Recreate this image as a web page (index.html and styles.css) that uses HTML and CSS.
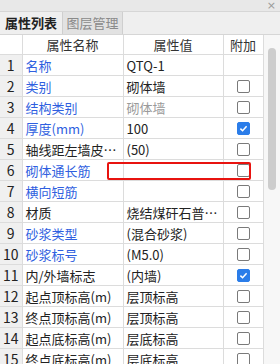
FILE: index.html
```html
<!DOCTYPE html>
<html lang="zh-CN">
<head>
    <meta charset="UTF-8">
    <title>属性列表</title>
    <link rel="stylesheet" href="styles.css">
</head>
<body>
    <div class="panel">
        <div class="titlebar"><span class="close">×</span></div>
        <div class="tabs">
            <div class="tab active">属性列表</div>
            <div class="tab">图层管理</div>
        </div>
        <div class="grid">
            <div class="table-wrap">
                <table class="props">
                    <colgroup>
                        <col class="c-num"><col class="c-name"><col class="c-val"><col class="c-add">
                    </colgroup>
                    <thead>
                        <tr><th></th><th>属性名称</th><th>属性值</th><th>附加</th></tr>
                    </thead>
                    <tbody>
                        <tr><td class="num">1</td><td class="name link">名称</td><td>QTQ-1</td><td></td></tr>
                        <tr><td class="num">2</td><td class="name link">类别</td><td>砌体墙</td><td class="add"><span class="box"></span></td></tr>
                        <tr><td class="num">3</td><td class="name link">结构类别</td><td class="muted">砌体墙</td><td class="add"><span class="box"></span></td></tr>
                        <tr><td class="num">4</td><td class="name link">厚度(mm)</td><td>100</td><td class="add"><span class="box checked"></span></td></tr>
                        <tr><td class="num">5</td><td class="name">轴线距左墙皮距离(mm)</td><td>(50)</td><td class="add"><span class="box"></span></td></tr>
                        <tr><td class="num">6</td><td class="name link">砌体通长筋</td><td></td><td class="add"><span class="box"></span></td></tr>
                        <tr><td class="num">7</td><td class="name link">横向短筋</td><td></td><td class="add"><span class="box"></span></td></tr>
                        <tr><td class="num">8</td><td class="name">材质</td><td>烧结煤矸石普通砖</td><td class="add"><span class="box"></span></td></tr>
                        <tr><td class="num">9</td><td class="name link">砂浆类型</td><td>(混合砂浆)</td><td class="add"><span class="box"></span></td></tr>
                        <tr><td class="num">10</td><td class="name link">砂浆标号</td><td>(M5.0)</td><td class="add"><span class="box"></span></td></tr>
                        <tr><td class="num">11</td><td class="name">内/外墙标志</td><td>(内墙)</td><td class="add"><span class="box checked"></span></td></tr>
                        <tr><td class="num">12</td><td class="name">起点顶标高(m)</td><td>层顶标高</td><td class="add"><span class="box"></span></td></tr>
                        <tr><td class="num">13</td><td class="name">终点顶标高(m)</td><td>层顶标高</td><td class="add"><span class="box"></span></td></tr>
                        <tr><td class="num">14</td><td class="name">起点底标高(m)</td><td>层底标高</td><td class="add"><span class="box"></span></td></tr>
                        <tr><td class="num">15</td><td class="name">终点底标高(m)</td><td>层底标高</td><td class="add"><span class="box"></span></td></tr>
                    </tbody>
                </table>
                <div class="highlight"></div>
            </div>
            <div class="scrollbar"><div class="thumb"></div></div>
        </div>
    </div>
</body>
</html>
```
FILE: styles.css
```css
body {
    margin: 0;
    width: 280px;
    height: 364px;
    overflow: hidden;
    background: #ffffff;
    font-family: "Noto Sans CJK SC", "Noto Sans", sans-serif;
    font-size: 13px;
    color: #222;
}

.panel {
    display: flex;
    flex-direction: column;
    height: 364px;
}

.titlebar {
    height: 11px;
    background: #e8e8e8;
    border-bottom: 1px solid #d6d6d6;
    display: flex;
    justify-content: flex-end;
    align-items: center;
}

.close {
    font-family: "DejaVu Sans", sans-serif;
    font-size: 11px;
    line-height: 11px;
    height: 11px;
    color: #9a9a9a;
    margin-right: 4px;
}

.tabs {
    height: 22px;
    background: #efefef;
    border-bottom: 1px solid #d6d6d6;
    display: flex;
}

.tab {
    width: 59px;
    line-height: 22px;
    text-align: center;
    font-size: 13px;
    color: #8a8a8a;
    background: #e2e2e2;
    border-right: 1px solid #cfcfcf;
    border-left: 1px solid #cfcfcf;
}

.tab.active {
    width: 62px;
    color: #222;
    font-weight: bold;
    background: #efefef;
    border: none;
}

.grid {
    display: flex;
    flex: 1;
    overflow: hidden;
}

.table-wrap {
    position: relative;
    width: 263px;
}

.props {
    border-collapse: collapse;
    table-layout: fixed;
    width: 263px;
}

.c-num { width: 22px; }
.c-name { width: 101px; }
.c-val { width: 100px; }
.c-add { width: 40px; }

.props th {
    height: 19px;
    font-weight: normal;
    color: #333;
    text-align: center;
    border: 1px solid #dcdcdc;
    border-top: none;
    padding: 0;
}

.props td {
    height: 20px;
    padding: 0 0 0 3px;
    border: 1px solid #dcdcdc;
    white-space: nowrap;
    overflow: hidden;
    text-overflow: ellipsis;
}

.props th:first-child,
.props td:first-child {
    border-left: none;
}

.props td.num {
    background: #f0f0f0;
    text-align: center;
    padding: 0;
    font-size: 14px;
}

.props td.name.link {
    color: #2f5fe0;
}

.props td.muted {
    color: #9a9a9a;
}

.props td.add {
    text-align: center;
    padding: 0;
}

.box {
    display: inline-block;
    width: 11px;
    height: 11px;
    border: 1px solid #7a7a7a;
    border-radius: 2px;
    background: #fff;
    vertical-align: middle;
    margin-top: -2px;
}

.box.checked {
    border-color: #2b7de9;
    background: #2b7de9 url("data:image/svg+xml,%3Csvg xmlns='http://www.w3.org/2000/svg' viewBox='0 0 12 12'%3E%3Cpath d='M2.6 6.2 L5 8.4 L9.4 3.6' fill='none' stroke='white' stroke-width='1.7'/%3E%3C/svg%3E") center/11px no-repeat;
}

.highlight {
    position: absolute;
    left: 107px;
    top: 127px;
    width: 140px;
    height: 14px;
    border: 2px solid #e8130f;
    border-radius: 2px;
}

.scrollbar {
    width: 17px;
    background: #f7f7f7;
    padding-top: 13px;
    display: flex;
    justify-content: center;
}

.thumb {
    width: 8px;
    height: 142px;
    border-radius: 4px;
    background: #cdcdcd;
}
```
